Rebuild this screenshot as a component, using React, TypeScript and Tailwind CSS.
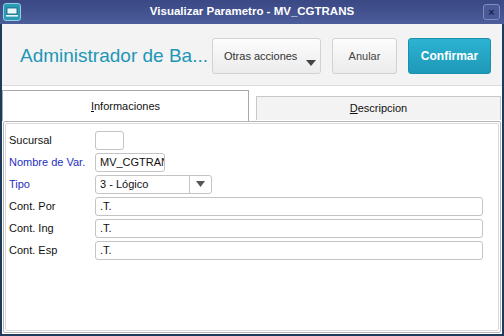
import React from "react";

const font = { fontFamily: '"Liberation Sans", Arial, sans-serif' };

function Field({ label, blue, children }: { label: string; blue?: boolean; children: React.ReactNode }) {
  return (
    <div className="flex h-[22px] items-center">
      <span className={`w-[86px] whitespace-nowrap text-[11px] ${blue ? "text-[#1f2fc0]" : "text-[#111]"}`}>{label}</span>
      {children}
    </div>
  );
}

function Input({ w, value }: { w: string; value?: string }) {
  return (
    <div
      className={`${w} flex h-[19px] items-center overflow-hidden whitespace-nowrap rounded-[3px] border border-[#c4c4c4] bg-white px-[4px] text-[11px] text-[#111]`}
    >
      {value}
    </div>
  );
}

export default function App() {
  return (
    <div className="flex h-[336px] w-[504px] flex-col bg-[#1d3a5c]" style={font}>
      {/* title bar */}
      <div className="relative flex h-[24px] items-center justify-center bg-gradient-to-b from-[#3a4884] to-[#4c5d9b]">
        <div className="absolute left-[3px] top-[3px] flex h-[18px] w-[18px] items-center justify-center rounded-[3px] border border-[#8fd0e0] bg-[#2a9ab5]">
          <svg width="12" height="10" viewBox="0 0 12 10">
            <rect x="1" y="1" width="10" height="6" fill="#e8f6fa" stroke="#0f5d70" strokeWidth="0.8" />
            <rect x="0" y="8" width="12" height="1.6" fill="#e8f6fa" />
          </svg>
        </div>
        <span className="whitespace-nowrap text-[11.5px] font-bold text-white">Visualizar Parametro - MV_CGTRANS</span>
        <div className="absolute right-[4px] top-[4px] flex h-[16px] w-[17px] items-center justify-center rounded-[3px] border border-[#7f8cc0] bg-[#4a5a98]">
          <span className="text-[11px] font-bold leading-none text-[#1c2450]">×</span>
        </div>
      </div>

      <div className="mx-[2px] mb-[2px] flex flex-1 flex-col bg-white">
        {/* header */}
        <div className="flex h-[62px] items-center border-b border-[#dcdcdc] bg-[#f3f3f3] pl-[18px] pr-[11px] pt-[3px]">
          <span className="min-w-0 flex-1 whitespace-nowrap text-[19px] text-[#2196b6]">Administrador de Ba...</span>
          <div className="relative flex h-[36px] w-[109px] shrink-0 items-center rounded-[3px] border border-[#d2d2d2] bg-gradient-to-b from-[#fcfcfc] to-[#ececec] pl-[11px] text-[11px] text-[#333]">
            Otras acciones
            <svg className="absolute bottom-[7px] right-[4px]" width="10" height="6" viewBox="0 0 10 6">
              <path d="M0 0h10L5 6z" fill="#444" />
            </svg>
          </div>
          <div className="ml-[11px] flex h-[36px] w-[65px] shrink-0 items-center justify-center rounded-[3px] border border-[#d2d2d2] bg-gradient-to-b from-[#fcfcfc] to-[#ececec] text-[11px] text-[#444]">
            Anular
          </div>
          <div className="ml-[11px] flex h-[36px] w-[83px] shrink-0 items-center justify-center rounded-[3px] border border-[#1b8fae] bg-gradient-to-b from-[#2db3d2] to-[#1e98b8] text-[12px] font-bold text-white">
            Confirmar
          </div>
        </div>

        {/* tabs */}
        <div className="flex h-[35px] items-end pr-[1px]">
          <div className="flex h-[31px] w-[247px] items-center justify-center border border-b-0 border-[#a9a9a9] bg-white text-[11px] text-[#111]">
            <span>
              <u>I</u>nformaciones
            </span>
          </div>
          <div className="mb-[1px] ml-[7px] flex h-[24px] flex-1 items-center justify-center border border-b-0 border-[#c8c8c8] bg-[#f3f3f3] text-[11px] text-[#111]">
            <span>
              <u>D</u>escripcion
            </span>
          </div>
        </div>

        {/* panel */}
        <div className="mx-[1px] mb-[1px] flex flex-1 flex-col rounded-[2px] border border-[#b4b4b4] p-[1px]">
          <div className="flex flex-1 flex-col rounded-[2px] border border-[#dadada] pl-[3px] pr-[15px] pt-[5px]">
            <Field label="Sucursal">
              <Input w="w-[29px]" />
            </Field>
            <Field label="Nombre de Var." blue>
              <Input w="w-[70px]" value="MV_CGTRAN" />
            </Field>
            <Field label="Tipo" blue>
              <div className="flex h-[19px] w-[117px] items-center rounded-[3px] border border-[#c4c4c4] bg-white text-[11px] text-[#111]">
                <span className="flex-1 pl-[4px]">3 - Lógico</span>
                <div className="flex h-full w-[22px] items-center justify-center border-l border-[#c4c4c4]">
                  <svg width="9" height="6" viewBox="0 0 9 6">
                    <path d="M0 0h9L4.5 6z" fill="#555" />
                  </svg>
                </div>
              </div>
            </Field>
            <Field label="Cont. Por">
              <Input w="flex-1" value=".T." />
            </Field>
            <Field label="Cont. Ing">
              <Input w="flex-1" value=".T." />
            </Field>
            <Field label="Cont. Esp">
              <Input w="flex-1" value=".T." />
            </Field>
          </div>
        </div>
      </div>
    </div>
  );
}
